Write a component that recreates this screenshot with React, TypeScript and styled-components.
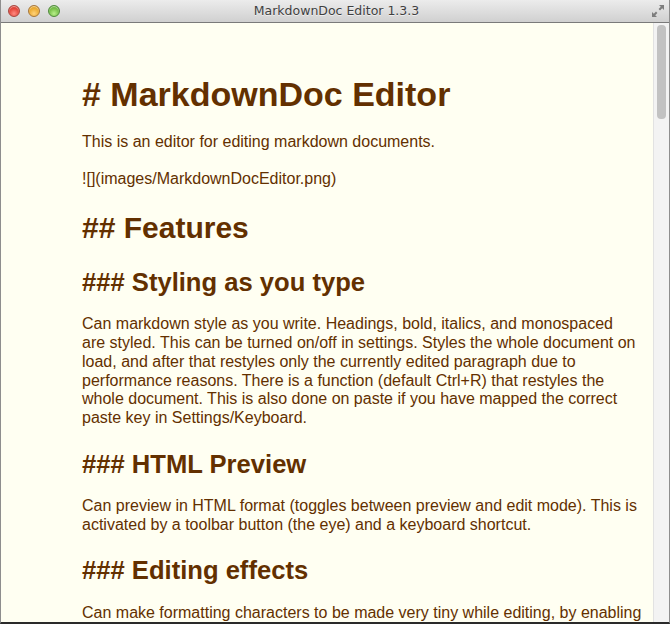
import React from "react";
import styled, { createGlobalStyle } from "styled-components";

const Global = createGlobalStyle`
  html, body { margin: 0; padding: 0; overflow: hidden; background: #3a3a3a; }
  * { box-sizing: border-box; }
`;

const Window = styled.div`
  width: 670px;
  height: 624px;
  display: flex;
  flex-direction: column;
  border-left: 1px solid #8e8e8e;
  border-right: 1px solid #8e8e8e;
  border-bottom: 2px solid #2a2a2a;
  background: #fffff2;
  overflow: hidden;
`;

const TitleBar = styled.div`
  height: 23px;
  flex: 0 0 23px;
  display: grid;
  grid-template-columns: 1fr auto 1fr;
  align-items: center;
  background: linear-gradient(#ececec, #d0d0d0);
  border-bottom: 1px solid #7a7a7a;
  padding: 0 4px 1px 7px;
`;

const Lights = styled.div`
  display: flex;
  gap: 8px;
  align-items: center;
`;

const Light = styled.span<{ $c1: string; $c2: string; $edge: string }>`
  width: 12px;
  height: 12px;
  border-radius: 50%;
  background: radial-gradient(circle at 50% 75%, ${(p) => p.$c1} 0%, ${(p) => p.$c2} 80%);
  border: 1px solid ${(p) => p.$edge};
  box-shadow: inset 0 1px 1px rgba(255, 255, 255, 0.6);
`;

const Title = styled.div`
  font-family: "DejaVu Sans", "Liberation Sans", sans-serif;
  font-size: 12.5px;
  color: #3f3f3f;
  text-shadow: 0 1px 0 rgba(255, 255, 255, 0.6);
`;

const ResizeBox = styled.div`
  justify-self: end;
  display: flex;
  align-items: center;
`;

const Body = styled.div`
  flex: 1;
  display: flex;
  min-height: 0;
`;

const Doc = styled.div`
  flex: 1;
  padding: 51px 0 0 81px;
  overflow: hidden;
  font-family: "Liberation Sans", Arial, sans-serif;
  color: #633000;
`;

const H1 = styled.h1`
  font-size: 34px;
  line-height: 40px;
  font-weight: bold;
  margin: 0;
`;

const H2 = styled.h2`
  font-size: 30px;
  line-height: 36px;
  font-weight: bold;
  margin: 21.7px 0 0;
`;

const H3 = styled.h3`
  font-size: 25.6px;
  line-height: 30px;
  font-weight: bold;
  margin: 20.5px 0 0;
`;

const P = styled.p`
  font-size: 16px;
  line-height: 18.8px;
  margin: 18.5px 0 0;
  white-space: nowrap;
`;

const Scrollbar = styled.div`
  width: 16px;
  flex: 0 0 16px;
  background: #f3f3f3;
  border-left: 1px solid #e2e2e2;
  padding: 2px 3px 0 3px;
`;

const Thumb = styled.div`
  height: 94px;
  border-radius: 4px;
  background: #c2c2c2;
`;

const Lines = ({ lines }: { lines: string[] }) => (
  <P>
    {lines.map((l, i) => (
      <React.Fragment key={i}>
        {l}
        {i < lines.length - 1 && <br />}
      </React.Fragment>
    ))}
  </P>
);

export default function App() {
  return (
    <>
      <Global />
      <Window>
        <TitleBar>
          <Lights>
            <Light $c1="#ff8a80" $c2="#d8281c" $edge="#a8463e" />
            <Light $c1="#ffd27a" $c2="#e39a12" $edge="#a7763a" />
            <Light $c1="#b8ef8a" $c2="#5aab2c" $edge="#4f8a3b" />
          </Lights>
          <Title>MarkdownDoc Editor 1.3.3</Title>
          <ResizeBox>
            <svg width="14" height="14" viewBox="0 0 14 14">
              <path d="M8 1h5v5l-1.8-1.8-2.2 2.2-1.4-1.4 2.2-2.2z" fill="#7d7d7d" />
              <path d="M6 13H1V8l1.8 1.8 2.2-2.2 1.4 1.4-2.2 2.2z" fill="#7d7d7d" />
            </svg>
          </ResizeBox>
        </TitleBar>
        <Body>
          <Doc>
            <H1># MarkdownDoc Editor</H1>
            <P>This is an editor for editing markdown documents.</P>
            <P>![](images/MarkdownDocEditor.png)</P>
            <H2>## Features</H2>
            <H3>### Styling as you type</H3>
            <Lines
              lines={[
                "Can markdown style as you write. Headings, bold, italics, and monospaced",
                "are styled. This can be turned on/off in settings. Styles the whole document on",
                "load, and after that restyles only the currently edited paragraph due to",
                "performance reasons. There is a function (default Ctrl+R) that restyles the",
                "whole document. This is also done on paste if you have mapped the correct",
                "paste key in Settings/Keyboard.",
              ]}
            />
            <H3>### HTML Preview</H3>
            <Lines
              lines={[
                "Can preview in HTML format (toggles between preview and edit mode). This is",
                "activated by a toolbar button (the eye) and a keyboard shortcut.",
              ]}
            />
            <H3>### Editing effects</H3>
            <Lines
              lines={[
                "Can make formatting characters to be made very tiny while editing, by enabling",
              ]}
            />
          </Doc>
          <Scrollbar>
            <Thumb />
          </Scrollbar>
        </Body>
      </Window>
    </>
  );
}
